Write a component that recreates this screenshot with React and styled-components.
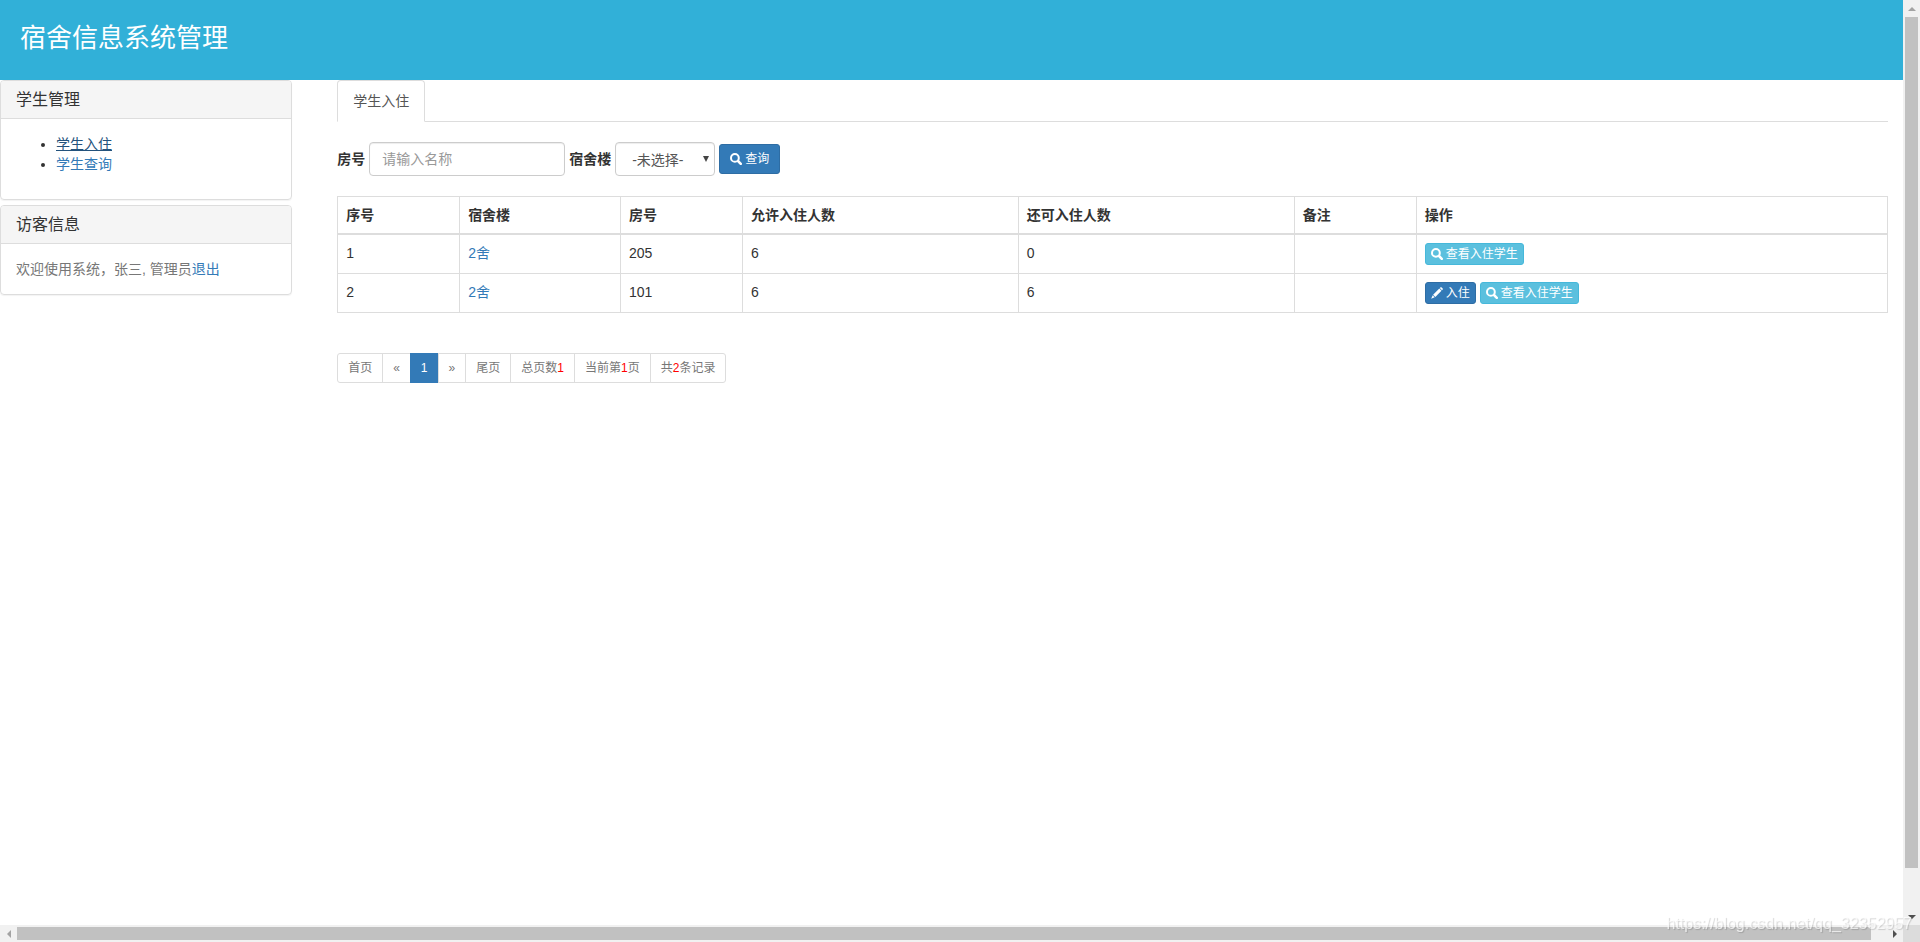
import React from 'react';
import styled, { createGlobalStyle } from 'styled-components';

const GlobalStyle = createGlobalStyle`
  *, *::before, *::after { box-sizing: border-box; }
  body {
    margin: 0;
    background: #fff;
    color: #333;
    font: 14px/20px "Liberation Sans", Arial, "Noto Sans CJK SC", sans-serif;
  }
  button, input, select { font-family: inherit; }
`;

const Frame = styled.div`
  display: grid;
  grid-template-columns: minmax(0, 1fr) 17px;
  grid-template-rows: 1fr 17px;
  min-height: 100vh;
`;

const Page = styled.div`
  min-width: 0;
`;

const Header = styled.header`
  height: 80px;
  padding: 20px;
  background: #31b0d8;
  color: #fff;
`;

const Title = styled.h1`
  margin: 0;
  font-size: 26px;
  font-weight: 400;
  line-height: 36px;
`;

const Columns = styled.div`
  display: grid;
  grid-template-columns: calc((100% + 45px) / 6 - 30px) minmax(0, 1fr);
  column-gap: 45px;
  align-items: start;
  padding-right: 15px;
`;

const Sidebar = styled.aside`
  display: flex;
  flex-direction: column;
  gap: 5px;
`;

const Panel = styled.section`
  border: 1px solid #ddd;
  border-radius: 4px;
  box-shadow: 0 1px 1px rgba(0, 0, 0, 0.05);
  overflow: hidden;
`;

const PanelTitle = styled.h2`
  margin: 0;
  padding: 10px 15px;
  border-bottom: 1px solid #ddd;
  background: #f5f5f5;
  font-size: 16px;
  font-weight: 400;
  line-height: 17px;
`;

const PanelBody = styled.div`
  padding: 15px;
  color: #777;
`;

const Menu = styled.ul`
  margin: 0 0 10px;
  padding-left: 40px;
  color: #333;
`;

const Link = styled.a`
  color: ${(p) => (p.$active ? '#23527c' : '#337ab7')};
  text-decoration: ${(p) => (p.$active ? 'underline' : 'none')};
`;

const Tabs = styled.nav`
  display: flex;
  border-bottom: 1px solid #ddd;
`;

const Tab = styled.a`
  margin-bottom: -1px;
  padding: 10px 15px;
  border: 1px solid #ddd;
  border-bottom-color: #fff;
  border-radius: 4px 4px 0 0;
  background: #fff;
  color: #555;
  text-decoration: none;
`;

const SearchForm = styled.form`
  display: flex;
  align-items: center;
  gap: 4px;
  margin: 20px 0;
`;

const Label = styled.label`
  font-weight: 700;
`;

const TextInput = styled.input`
  width: 196px;
  height: 34px;
  padding: 6px 12px;
  border: 1px solid #ccc;
  border-radius: 4px;
  box-shadow: inset 0 1px 1px rgba(0, 0, 0, 0.075);
  color: #555;
  font-size: 14px;
  &::placeholder { color: #999; }
`;

const Picker = styled.select`
  width: 100px;
  height: 34px;
  padding: 7px 16px 5px;
  border: 1px solid #ccc;
  border-radius: 4px;
  box-shadow: inset 0 1px 1px rgba(0, 0, 0, 0.075);
  appearance: none;
  background: #fff;
  color: #555;
  font-size: 14px;
`;

const PickerBox = styled.span`
  position: relative;
  display: flex;
  svg {
    position: absolute;
    right: 6px;
    top: 14px;
    pointer-events: none;
  }
`;

const tones = {
  primary: { fill: '#337ab7', edge: '#2e6da4' },
  info: { fill: '#5bc0de', edge: '#46b8da' },
};

const Button = styled.button`
  display: inline-flex;
  align-items: center;
  gap: 3px;
  height: ${(p) => (p.$small ? 22 : 30)}px;
  padding: 0 ${(p) => (p.$small ? 5 : 10)}px;
  border: 1px solid ${(p) => tones[p.$tone].edge};
  border-radius: 3px;
  background: ${(p) => tones[p.$tone].fill};
  color: #fff;
  font-size: 12px;
  line-height: 18px;
  white-space: nowrap;
`;

const Actions = styled.div`
  display: flex;
  gap: 4px;
`;

const Table = styled.table`
  width: 100%;
  border-collapse: collapse;
  table-layout: fixed;
  th, td {
    padding: 8px;
    border: 1px solid #ddd;
    text-align: left;
    vertical-align: top;
  }
  th { border-bottom-width: 2px; }
  td { height: 39px; }
`;

const Col = styled.col`
  width: ${(p) => p.$share}%;
`;

const Pager = styled.ul`
  display: flex;
  margin: 40px 0 20px;
  padding: 0;
  list-style: none;
`;

const PagerItem = styled.li`
  margin-left: -1px;
  padding: 5px 10px;
  border: 1px solid ${(p) => (p.$active ? '#337ab7' : '#ddd')};
  background: ${(p) => (p.$active ? '#337ab7' : '#fff')};
  color: ${(p) => (p.$active ? '#fff' : '#777')};
  font-size: 12px;
  line-height: 18px;
  a { color: inherit; text-decoration: none; }
  &:first-child { margin-left: 0; border-radius: 3px 0 0 3px; }
  &:last-child { border-radius: 0 3px 3px 0; }
`;

const Count = styled.span`
  color: #f00;
`;

const Rail = styled.div`
  display: flex;
  flex-direction: ${(p) => (p.$vertical ? 'column' : 'row')};
  background: #f1f1f1;
`;

const RailButton = styled.button`
  display: flex;
  align-items: center;
  justify-content: center;
  flex: none;
  width: 17px;
  height: 17px;
  padding: 0;
  border: 0;
  background: none;
  color: ${(p) => (p.disabled ? '#a3a3a3' : '#505050')};
`;

const RailTrack = styled.div`
  flex: 1;
  padding: ${(p) => (p.$vertical ? '0 2px' : '2px 0')};
`;

const Thumb = styled.div`
  width: ${(p) => (p.$vertical ? '100%' : '99.2%')};
  height: ${(p) => (p.$vertical ? '95.5%' : '100%')};
  background: #c1c1c1;
`;

const Corner = styled.div`
  background: #dcdcdc;
`;

const Watermark = styled.span`
  position: fixed;
  right: 8px;
  bottom: 8px;
  color: rgba(255, 255, 255, 0.7);
  font-size: 16px;
  text-shadow: 1px 1px 1px rgba(0, 0, 0, 0.16);
  pointer-events: none;
`;

const SearchIcon = () => (
  <svg width="12" height="12" viewBox="0 0 12 12" fill="none" stroke="currentColor" aria-hidden="true">
    <circle cx="4.9" cy="4.9" r="3.9" strokeWidth="2" />
    <path d="M8 8 L10.8 10.8" strokeWidth="2.5" strokeLinecap="round" />
  </svg>
);

const PencilIcon = () => (
  <svg width="12" height="12" viewBox="0 0 12 12" fill="currentColor" aria-hidden="true">
    <path d="M8.8 1 L9.6 .3 Q10 0 10.4 .3 L11.7 1.6 Q12 2 11.7 2.4 L11 3.2 Z" />
    <path d="M8.3 1.5 L10.5 3.7 L4.3 9.9 L2.1 7.7 Z" />
    <path d="M1.7 8.3 L3.7 10.3 L.2 11.7 Z" />
  </svg>
);

const arrows = {
  up: 'M0 6 L4 2 L8 6 Z',
  down: 'M0 2 L8 2 L4 6 Z',
  left: 'M6 0 L2 4 L6 8 Z',
  right: 'M2 0 L6 4 L2 8 Z',
};

const Arrow = ({ dir }) => (
  <svg width="8" height="8" viewBox="0 0 8 8" fill="currentColor" aria-hidden="true">
    <path d={arrows[dir]} />
  </svg>
);

const Scrollbar = ({ vertical }) => (
  <Rail $vertical={vertical}>
    <RailButton type="button" disabled aria-label={vertical ? '向上' : '向左'}>
      <Arrow dir={vertical ? 'up' : 'left'} />
    </RailButton>
    <RailTrack $vertical={vertical}>
      <Thumb $vertical={vertical} />
    </RailTrack>
    <RailButton type="button" aria-label={vertical ? '向下' : '向右'}>
      <Arrow dir={vertical ? 'down' : 'right'} />
    </RailButton>
  </Rail>
);

const columns = [
  { name: '序号', share: 7.87 },
  { name: '宿舍楼', share: 10.38 },
  { name: '房号', share: 7.87 },
  { name: '允许入住人数', share: 17.8 },
  { name: '还可入住人数', share: 17.8 },
  { name: '备注', share: 7.87 },
  { name: '操作', share: 30.41 },
];

const rooms = [
  { id: 1, building: '2舍', room: '205', capacity: 6, free: 0 },
  { id: 2, building: '2舍', room: '101', capacity: 6, free: 6 },
];

export default function App() {
  return (
    <>
      <GlobalStyle />
      <Frame>
        <Page>
          <Header>
            <Title>宿舍信息系统管理</Title>
          </Header>
          <Columns>
            <Sidebar>
              <Panel>
                <PanelTitle>学生管理</PanelTitle>
                <PanelBody>
                  <Menu>
                    <li><Link href="#checkin" $active>学生入住</Link></li>
                    <li><Link href="#query">学生查询</Link></li>
                  </Menu>
                </PanelBody>
              </Panel>
              <Panel>
                <PanelTitle>访客信息</PanelTitle>
                <PanelBody>
                  欢迎使用系统，张三, 管理员<Link href="#logout">退出</Link>
                </PanelBody>
              </Panel>
            </Sidebar>
            <main>
              <Tabs>
                <Tab href="#checkin">学生入住</Tab>
              </Tabs>
              <SearchForm onSubmit={(e) => e.preventDefault()}>
                <Label htmlFor="room">房号</Label>
                <TextInput id="room" type="text" placeholder="请输入名称" />
                <Label htmlFor="building">宿舍楼</Label>
                <PickerBox>
                  <Picker id="building">
                    <option>-未选择-</option>
                    <option>2舍</option>
                  </Picker>
                  <svg width="6" height="6" viewBox="0 0 6 6" fill="#444" aria-hidden="true">
                    <path d="M0 0 H6 L3 6 Z" />
                  </svg>
                </PickerBox>
                <Button type="submit" $tone="primary"><SearchIcon />查询</Button>
              </SearchForm>
              <Table>
                <colgroup>
                  {columns.map((c) => <Col key={c.name} $share={c.share} />)}
                </colgroup>
                <thead>
                  <tr>{columns.map((c) => <th key={c.name} scope="col">{c.name}</th>)}</tr>
                </thead>
                <tbody>
                  {rooms.map((r) => (
                    <tr key={r.id}>
                      <td>{r.id}</td>
                      <td><Link href="#building">{r.building}</Link></td>
                      <td>{r.room}</td>
                      <td>{r.capacity}</td>
                      <td>{r.free}</td>
                      <td />
                      <td>
                        <Actions>
                          {r.free > 0 && (
                            <Button type="button" $small $tone="primary"><PencilIcon />入住</Button>
                          )}
                          <Button type="button" $small $tone="info"><SearchIcon />查看入住学生</Button>
                        </Actions>
                      </td>
                    </tr>
                  ))}
                </tbody>
              </Table>
              <Pager>
                <PagerItem><a href="#first">首页</a></PagerItem>
                <PagerItem><a href="#prev">«</a></PagerItem>
                <PagerItem $active><a href="#page-1">1</a></PagerItem>
                <PagerItem><a href="#next">»</a></PagerItem>
                <PagerItem><a href="#last">尾页</a></PagerItem>
                <PagerItem>总页数<Count>1</Count></PagerItem>
                <PagerItem>当前第<Count>1</Count>页</PagerItem>
                <PagerItem>共<Count>2</Count>条记录</PagerItem>
              </Pager>
            </main>
          </Columns>
        </Page>
        <Scrollbar vertical />
        <Scrollbar />
        <Corner />
      </Frame>
      <Watermark>https://blog.csdn.net/qq_32352957</Watermark>
    </>
  );
}
